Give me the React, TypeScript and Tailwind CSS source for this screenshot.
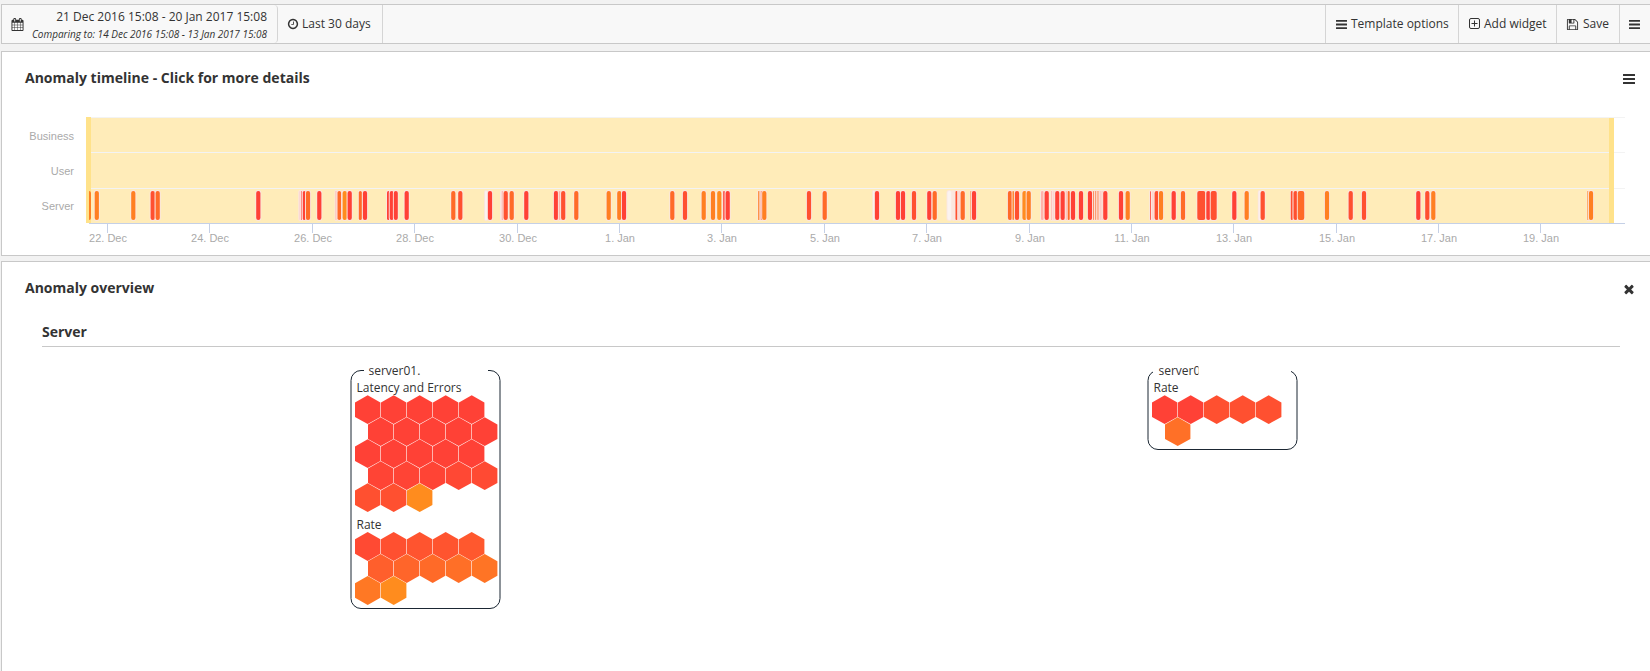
import React from "react";

const ICONS = {
  calendar:
    "M192 1664h288v-288h-288v288zm352 0h320v-288h-320v288zm-352-352h288v-320h-288v320zm352 0h320v-320h-320v320zm-352-384h288v-288h-288v288zm736 736h320v-288h-320v288zm-384-736h320v-288h-320v288zm768 736h288v-288h-288v288zm-384-352h320v-320h-320v320zm-352-864v-288q0-13-9.5-22.5t-22.5-9.5h-64q-13 0-22.5 9.5t-9.5 22.5v288q0 13 9.5 22.5t22.5 9.5h64q13 0 22.5-9.5t9.5-22.5zm736 864h288v-320h-288v320zm-384-384h320v-288h-320v288zm384 0h288v-288h-288v288zm32-480v-288q0-13-9.5-22.5t-22.5-9.5h-64q-13 0-22.5 9.5t-9.5 22.5v288q0 13 9.5 22.5t22.5 9.5h64q13 0 22.5-9.5t9.5-22.5zm384-64v1280q0 52-38 90t-90 38h-1408q-52 0-90-38t-38-90v-1280q0-52 38-90t90-38h128v-96q0-66 47-113t113-47h64q66 0 113 47t47 113v96h384v-96q0-66 47-113t113-47h64q66 0 113 47t47 113v96h128q52 0 90 38t38 90z",
  clock:
    "M1024 544v448q0 14-9 23t-23 9h-320q-14 0-23-9t-9-23v-64q0-14 9-23t23-9h224v-352q0-14 9-23t23-9h64q14 0 23 9t9 23zm416 352q0-148-73-273t-198-198-273-73-273 73-198 198-73 273 73 273 198 198 273 73 273-73 198-198 73-273zm224 0q0 209-103 385.5t-279.5 279.5-385.5 103-385.5-103-279.5-279.5-103-385.5 103-385.5 279.5-279.5 385.5-103 385.5 103 279.5 279.5 103 385.5z",
  save:
    "M512 1536h768v-384h-768v384zm896 0h128v-896q0-14-10-38.5t-20-34.5l-281-281q-10-10-34-20t-39-10v416q0 40-28 68t-68 28h-576q-40 0-68-28t-28-68v-416h-128v1280h128v-416q0-40 28-68t68-28h832q40 0 68 28t28 68v416zm-384-928v-320q0-13-9.5-22.5t-22.5-9.5h-192q-13 0-22.5 9.5t-9.5 22.5v320q0 13 9.5 22.5t22.5 9.5h192q13 0 22.5-9.5t9.5-22.5zm640 32v928q0 40-28 68t-68 28h-1344q-40 0-68-28t-28-68v-1344q0-40 28-68t68-28h928q40 0 88 20t76 48l280 280q28 28 48 76t20 88z",
  close:
    "M1490 1322q0 40-28 68l-136 136q-28 28-68 28t-68-28l-294-294-294 294q-28 28-68 28t-68-28l-136-136q-28-28-28-68t28-68l294-294-294-294q-28-28-28-68t28-68l136-136q28-28 68-28t68 28l294 294 294-294q28-28 68-28t68 28l136 136q28 28 28 68t-28 68l-294 294 294 294q28 28 28 68z",
};

function Icon({ path, className }: { path: string; className: string }) {
  return (
    <svg viewBox="0 0 1792 1792" fill="currentColor" className={className}>
      <path d={path} />
    </svg>
  );
}

function Bars({ className }: { className: string }) {
  return (
    <svg viewBox="0 0 12 10" fill="currentColor" preserveAspectRatio="none" className={className}>
      <rect x="0" y="0" width="12" height="2" rx="0.3" />
      <rect x="0" y="4" width="12" height="2" rx="0.3" />
      <rect x="0" y="8" width="12" height="2" rx="0.3" />
    </svg>
  );
}

function PlusSquare({ className }: { className: string }) {
  return (
    <svg viewBox="0 0 11 11" fill="none" stroke="currentColor" className={className}>
      <rect x="0.5" y="0.5" width="10" height="10" rx="1.5" />
      <path d="M5.5 2.5v6M2.5 5.5h6" />
    </svg>
  );
}

const R = "#ff4136";
const S = "#ff5030";
const T = "#ff6a28";
const O = "#ff7f22";
const Y = "#ff8c1e";
const P = "#ffb3aa";
const L = "#fdd5d0";
const W = "#fbf3f0";

// Each event: centre x, colour, width
const EVENTS: [number, string, number?][] = [
  [96.8, O], [133.3, O], [152.7, S], [157.7, T], [258.3, R],
  [300.2, L, 2], [301.7, R, 0.6], [304.3, R, 3], [308, T], [319.3, R], [336, P, 1], [339.3, T, 3.6], [344.7, Y], [349.7, R],
  [360.3, T, 3], [365, R], [388.5, R, 3], [391.7, R, 4], [395.8, R, 4], [406.7, R],
  [453.3, T], [460.3, S], [486, W, 2], [490, R], [501.8, L, 1.6], [503, R, 0.6], [505.7, S], [511.7, T], [526.3, R],
  [556, R], [559.8, P, 2], [563.2, S], [576.3, T], [608.7, O], [619.3, O], [624, R],
  [672.3, T], [685, S], [703.7, O], [713, O], [719.3, Y], [724, R, 1.6], [727.7, R],
  [758.8, O, 1.2], [761.3, S, 1], [764.3, O],
  [809, S], [824.7, T], [873.7, W, 1], [877, R], [898, R], [903, R], [914, S], [929.3, R], [934.7, T],
  [949.5, W], [953.5, "#fbe6de", 2.4], [956.5, S, 2], [959.3, L, 2], [962.7, T], [971, O, 1], [974, R],
  [1010, T], [1013.2, O, 1.4], [1017, S], [1024.5, Y], [1028.7, O],
  [1042.3, P, 2.6], [1046.7, R], [1051.7, P, 1], [1054, L, 2.6], [1057.3, R], [1062.7, R], [1066.3, P, 1],
  [1068.7, T, 2], [1073, R], [1081, R], [1090, R],
  [1093.7, T, 0.8], [1095.8, T, 0.8], [1098, T, 0.8], [1100.2, P, 0.8], [1102.2, P, 1], [1105.3, R],
  [1121, R], [1127.7, O], [1150.5, R, 0.8], [1153.3, L, 2.6], [1156.7, S], [1161, O], [1173.7, R], [1183, T],
  [1201.3, S, 8], [1208.3, R, 4], [1213.7, S, 6], [1234.3, R], [1246.7, O],
  [1259.7, W, 2], [1262.7, S], [1291.8, S, 2], [1295.5, S, 4], [1301, T, 6.5],
  [1327, O], [1350.7, S], [1364, S], [1418.3, R], [1427.3, S], [1433.3, O], [1588, Y, 1.2], [1591, O],
];

const TICKS: [number, string][] = [
  [107, "22. Dec"], [209, "24. Dec"], [312, "26. Dec"], [414, "28. Dec"], [517, "30. Dec"],
  [619, "1. Jan"], [721, "3. Jan"], [824, "5. Jan"], [926, "7. Jan"], [1029, "9. Jan"],
  [1131, "11. Jan"], [1233, "13. Jan"], [1336, "15. Jan"], [1438, "17. Jan"], [1540, "19. Jan"],
];

// The timeline's own x axis starts at 26, the inner edge of the panel
function Timeline() {
  return (
    <svg
      viewBox="26 110 1600 140"
      className="block h-[140px] w-[1600px]"
      fontFamily="'Liberation Sans', Arial, sans-serif"
      fontSize="11"
    >
      <rect x="86" y="117" width="1528" height="106" fill="#ffecb9" />
      <g fill="#f3f3f3">
        <rect x="89" y="117" width="1536" height="1" />
        <rect x="89" y="152" width="1536" height="1" />
        <rect x="89" y="188" width="1536" height="1" />
      </g>
      <rect x="86" y="117" width="5" height="106" fill="#ffe28a" />
      <rect x="1609" y="118" width="5" height="105" fill="#ffe28a" />
      <path d="M89 191q2 0 2 2v25q0 2-2 2z" fill={O} />
      {EVENTS.map(([x, color, w = 4.2], i) => (
        <rect
          key={i}
          x={x - w / 2}
          y={191}
          width={w}
          height={29}
          rx={Math.min(2, w / 2)}
          fill={color}
          stroke="#fbe6e0"
          strokeWidth="1.8"
          paintOrder="stroke"
        />
      ))}
      <rect x="89" y="223" width="1536" height="1" fill="#c5d0e6" />
      {TICKS.map(([x, label]) => (
        <g key={label}>
          <rect x={x} y="224" width="1" height="9" fill="#c5d0e6" />
          <text x={x + 1} y="242" textAnchor="middle" fill="#aaaaaa">{label}</text>
        </g>
      ))}
      <g textAnchor="end" fill="#aaaaaa">
        <text x="74" y="140">Business</text>
        <text x="74" y="175">User</text>
        <text x="74" y="210">Server</text>
      </g>
    </svg>
  );
}

function Hive({ rows, top }: { rows: string[][]; top: number }) {
  return (
    <>
      {rows.map((row, r) =>
        row.map((color, c) => {
          const x = 17.7 + c * 26 + (r % 2) * 13;
          const y = top + 14.2 + r * 22;
          return (
            <path
              key={`${r}-${c}`}
              d={`M${x} ${y - 14.4}l12.700 7.200v14.400l-12.700 7.200l-12.700-7.200v-14.400z`}
              fill={color}
            />
          );
        })
      )}
    </>
  );
}

const LATENCY = [
  [R, R, R, R, R],
  [R, R, R, R, R],
  [R, R, R, R, R],
  ["#ff4435", "#ff4435", "#ff4435", "#ff4834", "#ff4a33"],
  [S, S, Y],
];
const RATE_A = [
  ["#ff4a33", S, "#ff542f", "#ff542f", "#ff582e"],
  ["#ff5f2c", "#ff652a", T, "#ff6f27", "#ff7425"],
  ["#ff7824", Y],
];
const RATE_B = [[R, R, S, S, S], ["#ff7027"]];

function Group({
  title, titleX, titleWidth, height, gap, sections,
}: {
  title: string;
  titleX: number;
  titleWidth: number;
  height: number;
  gap: [number, number];
  sections: { label: string; y: number; top: number; rows: string[][] }[];
}) {
  return (
    <svg
      viewBox={`0 0 152 ${height}`}
      className="block w-[152px]"
      style={{ height }}
      fontFamily="'Open Sans', sans-serif"
      fontSize="12"
      fill="#333"
    >
      <rect x="1" y="10.5" width="149" height={height - 12} rx="10" fill="#fff" stroke="#1b2733" />
      <rect x={gap[0]} y="0" width={gap[1] - gap[0]} height="14" fill="#fff" />
      <svg x={titleX} y="0" width={titleWidth} height="18">
        <text x="0" y="15">{title}</text>
      </svg>
      {sections.map((s) => (
        <g key={s.label}>
          <text x="6.500" y={s.y}>{s.label}</text>
          <Hive rows={s.rows} top={s.top} />
        </g>
      ))}
    </svg>
  );
}

export default function App() {
  return (
    <div className="h-[671px] w-[1650px] overflow-hidden bg-[#f2f2f2] pl-px pt-1 font-['Open_Sans',sans-serif] text-[#333]">
      <header className="flex h-10 w-[1660px] border border-[#c8c8c8] bg-[#f8f8f8] text-[12px]">
        <div className="flex w-[276px] items-center justify-between rounded border-r border-[#d5d5d5] pl-[9px] pr-[10px]">
          <Icon path={ICONS.calendar} className="size-[13px]" />
          <div className="pt-px text-right">
            <div className="text-[12px] leading-[18px]">21 Dec 2016 15:08 - 20 Jan 2017 15:08</div>
            <div className="text-[10px] italic leading-[16px]">Comparing to: 14 Dec 2016 15:08 - 13 Jan 2017 15:08</div>
          </div>
        </div>
        <div className="flex w-[105px] items-center gap-[3px] border-r border-[#d5d5d5] pl-[9px]">
          <Icon path={ICONS.clock} className="size-[12px]" />
          <span>Last 30 days</span>
        </div>
        <div className="ml-[942px] flex w-[134px] items-center gap-[4px] border-x border-[#d5d5d5] pl-[10px]">
          <Bars className="h-[9px] w-[11px]" />
          <span>Template options</span>
        </div>
        <div className="flex w-[98px] items-center gap-[4px] border-r border-[#d5d5d5] pl-[10px]">
          <PlusSquare className="mb-px size-[11px]" />
          <span>Add widget</span>
        </div>
        <div className="flex w-[63px] items-center gap-[4px] border-r border-[#d5d5d5] pl-[9px]">
          <Icon path={ICONS.save} className="size-[13px]" />
          <span>Save</span>
        </div>
        <div className="flex items-center pl-[9px]">
          <Bars className="h-[9px] w-[11px]" />
        </div>
      </header>

      <section className="mt-[7px] h-[205px] w-[1660px] border border-[#c8c8c8] bg-white pl-[23px] pt-[14px]">
        <div className="flex h-[24px] w-[1610px] items-center justify-between">
          <h2 className="text-[14px] font-bold leading-6">Anomaly timeline - Click for more details</h2>
          <Bars className="mt-px h-[10px] w-[12px]" />
        </div>
        <div className="-mt-px ml-px pt-[21px]">
          <Timeline />
        </div>
      </section>

      <section className="mt-[5px] h-[430px] w-[1660px] border border-[#c8c8c8] bg-white pl-[23px] pt-[14px]">
        <div className="flex h-[24px] w-[1611px] items-center justify-between">
          <h2 className="text-[14px] font-bold leading-6">Anomaly overview</h2>
          <Icon path={ICONS.close} className="mt-[2px] size-[14px]" />
        </div>
        <div className="ml-[17px] mt-[20px] flex h-[27px] w-[1578px] items-start border-b border-[#c8c8c8]">
          <h3 className="text-[14px] font-bold leading-6">Server</h3>
        </div>
        <div className="ml-[2px] mt-[13px] grid w-[1594px] grid-cols-2 items-start justify-items-center">
          <Group
            title="server01."
            titleX={18.5}
            titleWidth={100}
            height={250}
            gap={[14, 138]}
            sections={[
              { label: "Latency and Errors", y: 31.5, top: 35.5, rows: LATENCY },
              { label: "Rate", y: 169, top: 172.3, rows: RATE_A },
            ]}
          />
          <Group
            title="server0"
            titleX={11.5}
            titleWidth={40}
            height={91}
            gap={[6, 144]}
            sections={[{ label: "Rate", y: 31.5, top: 35.5, rows: RATE_B }]}
          />
        </div>
      </section>
    </div>
  );
}
